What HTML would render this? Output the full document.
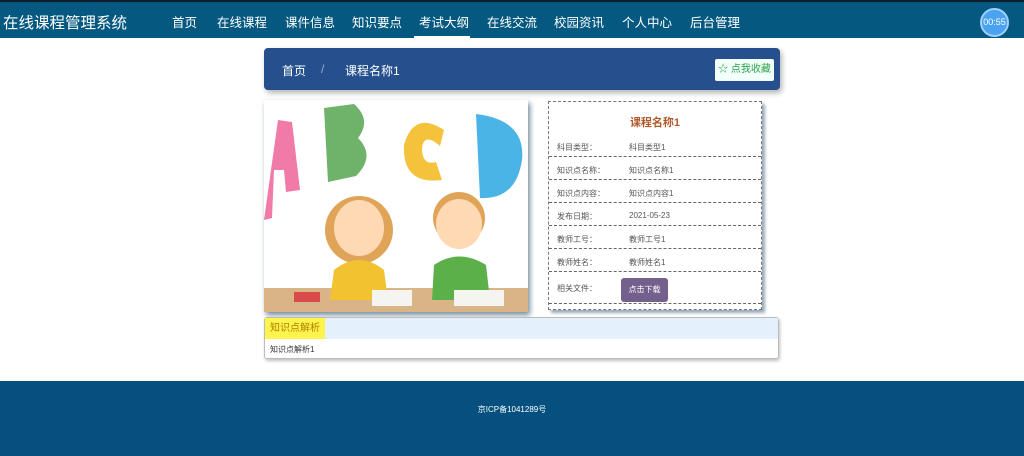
<!DOCTYPE html>
<html><head><meta charset="utf-8"><style>
*{margin:0;padding:0;box-sizing:border-box}
body{width:1024px;height:456px;background:#fff;font-family:"Liberation Sans","Noto Sans CJK SC",sans-serif;position:relative;overflow:hidden}
.nav{position:absolute;left:0;top:0;width:1024px;height:38px;background:#05587f;border-top:2px solid #0b1e2a}
.logo{position:absolute;left:3px;top:9px;color:#fff;font-size:15.5px}
.nav a{position:absolute;top:10px;color:#fff;font-size:12.5px;text-decoration:none}
.act{position:absolute;left:414px;top:34px;width:56px;height:2px;background:#fff}
.clock{position:absolute;left:980px;top:6px;width:29px;height:29px;border-radius:50%;background:#4aa3f0;border:2px solid #9fd0ff;color:#fff;font-size:9px;text-align:center;line-height:25px}
.bc{position:absolute;left:264px;top:48px;width:516px;height:42px;background:#26508d;border-radius:4px;box-shadow:2px 3px 6px rgba(0,0,0,.3);color:#fff;font-size:12px}
.bc span{position:absolute;top:14px}
.fav{position:absolute;left:715px;top:59px;width:59px;height:22px;background:#f3fffb;border-radius:2px;color:#2aa04a;font-size:10px;text-align:center;line-height:22px}
.img{position:absolute;left:264px;top:100px;width:264px;height:212px;background:#fff;box-shadow:2px 3px 5px rgba(20,60,90,.6);overflow:hidden}
.info{position:absolute;left:548px;top:101px;width:214px;height:209px;border:1px dashed #777;box-shadow:3px 3px 3px #9ab;font-size:8px;color:#555}
.info h3{color:#b05a2c;font-size:11px;text-align:center;margin-top:12px;height:20px}
.row{height:23px;border-bottom:1px dashed #666;position:relative}
.row b{font-weight:normal;position:absolute;left:8px;top:8px}
.row i{font-style:normal;position:absolute;left:80px;top:8px}
.dl{position:absolute;left:72px;top:176px;width:47px;height:24px;background:#74608d;color:#fff;border-radius:3px;font-size:8px;text-align:center;line-height:24px}
.an{position:absolute;left:264px;top:317px;width:515px;height:42px;border:1px solid #bbb;border-radius:3px;box-shadow:1px 2px 3px rgba(0,0,0,.25)}
.an .h{height:21px;background:#e4f0fc}
.an .h span{display:inline-block;height:21px;background:#fff34d;color:#b08000;font-size:10px;line-height:21px;padding:0 5px}
.an p{font-size:8px;color:#333;padding:5px 5px}
.foot{position:absolute;left:0;top:381px;width:1024px;height:75px;background:#05507f;color:#fff;font-size:8px;text-align:center;line-height:58px}
</style></head><body>
<div class="nav"><div class="logo">在线课程管理系统</div>
<a style="left:172px">首页</a><a style="left:217px">在线课程</a><a style="left:285px">课件信息</a><a style="left:352px">知识要点</a><a style="left:419px">考试大纲</a><a style="left:487px">在线交流</a><a style="left:554px">校园资讯</a><a style="left:622px">个人中心</a><a style="left:690px">后台管理</a>
<div class="act"></div><div class="clock">00:55</div></div>
<div class="bc"><span style="left:18px">首页</span><span style="left:57px;opacity:.5">/</span><span style="left:81px">课程名称1</span></div>
<div class="fav">☆ 点我收藏</div>
<div class="img"><svg width="264" height="212" viewBox="0 0 264 212">
<path d="M0 120 L14 20 L28 22 L36 90 L22 92 L20 70 L10 70 L8 118Z" fill="#f07aa8"/>
<path d="M60 8 L90 4 Q108 20 94 38 Q112 56 92 76 L64 82Z" fill="#6fb36a"/>
<path d="M180 30 Q150 10 140 45 Q138 85 178 80 L172 62 Q158 66 158 48 Q160 32 176 46Z" fill="#f5c23c"/>
<path d="M212 14 Q262 20 258 60 Q252 100 216 98Z" fill="#4bb4e6"/>
<rect x="0" y="188" width="264" height="24" fill="#d8b486"/>
<circle cx="95" cy="130" r="34" fill="#e0a458"/>
<ellipse cx="95" cy="128" rx="25" ry="28" fill="#ffd9b3"/>
<path d="M70 170 Q95 150 120 170 L124 200 L66 200Z" fill="#f2c230"/>
<circle cx="195" cy="118" r="26" fill="#e0a458"/>
<ellipse cx="195" cy="124" rx="23" ry="25" fill="#ffd9b3"/>
<path d="M170 165 Q195 148 222 165 L226 200 L168 200Z" fill="#5cb04a"/>
<rect x="108" y="190" width="40" height="16" fill="#f4f4f0"/><rect x="190" y="190" width="50" height="16" fill="#f4f4f0"/>
<rect x="30" y="192" width="26" height="10" fill="#d94a4a"/>
</svg></div>
<div class="info"><h3>课程名称1</h3>
<div class="row"><b>科目类型：</b><i>科目类型1</i></div>
<div class="row"><b>知识点名称：</b><i>知识点名称1</i></div>
<div class="row"><b>知识点内容：</b><i>知识点内容1</i></div>
<div class="row"><b>发布日期：</b><i>2021-05-23</i></div>
<div class="row"><b>教师工号：</b><i>教师工号1</i></div>
<div class="row"><b>教师姓名：</b><i>教师姓名1</i></div>
<div class="row" style="height:32px"><b style="top:11px">相关文件：</b></div>
<div class="dl">点击下载</div></div>
<div class="an"><div class="h"><span>知识点解析</span></div><p>知识点解析1</p></div>
<div class="foot">京ICP备1041289号</div>
</body></html>
